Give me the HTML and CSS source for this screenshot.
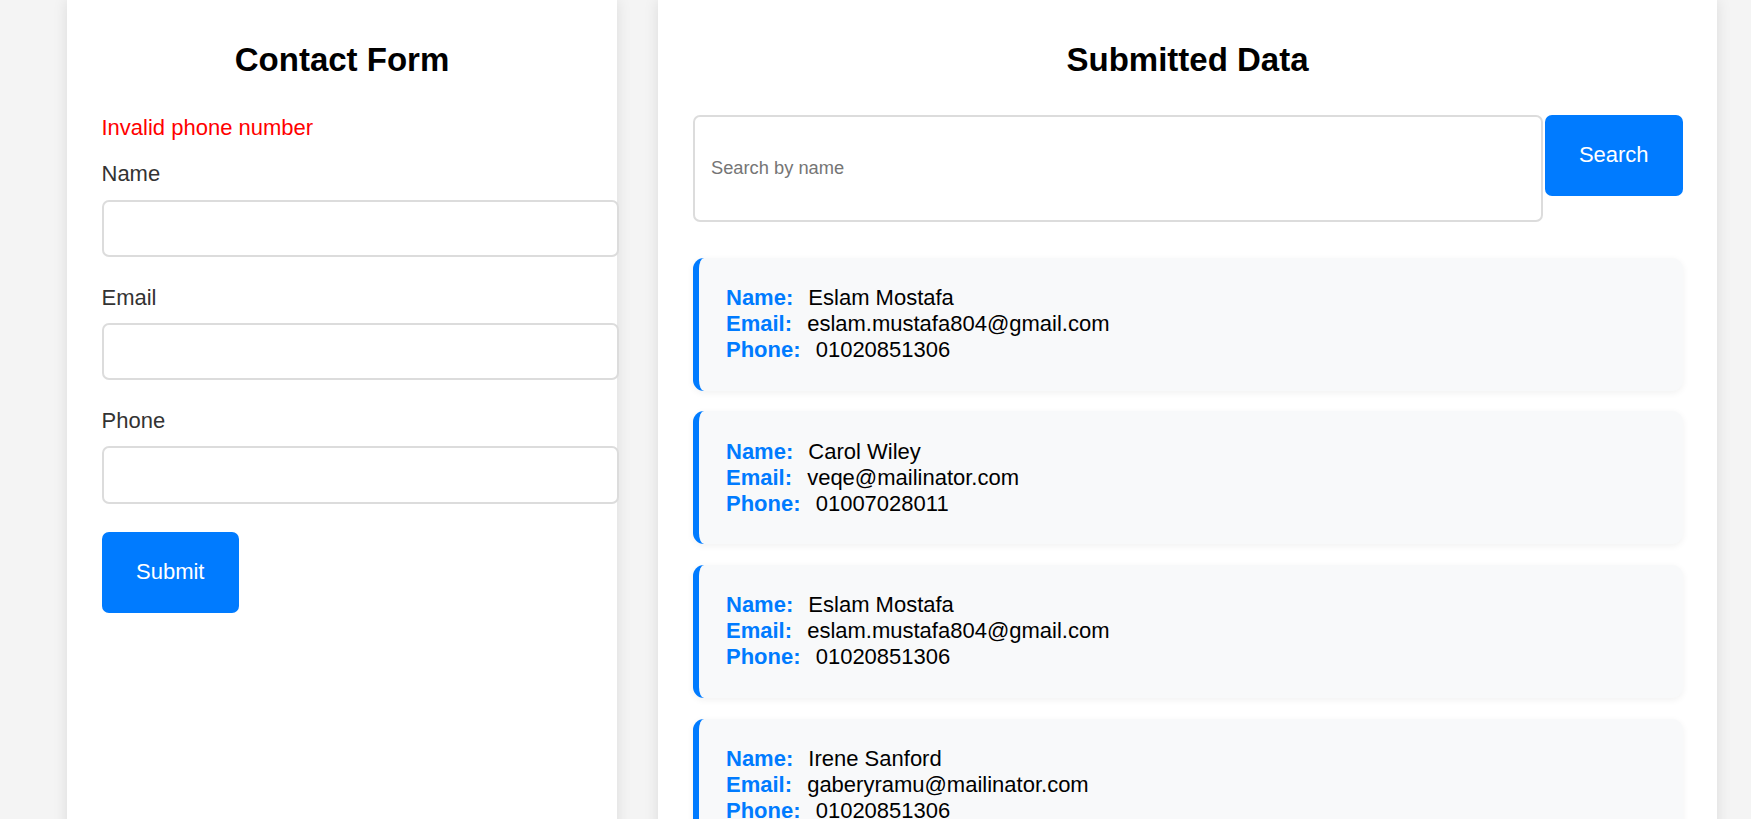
FILE: index.html
```html
<!DOCTYPE html>
<html lang="en">
<head>
<meta charset="utf-8">
<title>Contact Form</title>
<link rel="stylesheet" href="styles.css">
</head>
<body>
<div class="page">
  <section class="panel panel-form">
    <h2 class="panel-title">Contact Form</h2>
    <div class="error">Invalid phone number</div>
    <form class="contact-form">
      <div class="field">
        <label class="field-label" for="name">Name</label>
        <input class="field-input" id="name" type="text">
      </div>
      <div class="field">
        <label class="field-label" for="email">Email</label>
        <input class="field-input" id="email" type="email">
      </div>
      <div class="field">
        <label class="field-label" for="phone">Phone</label>
        <input class="field-input" id="phone" type="text">
      </div>
      <button class="btn btn-submit" type="button">Submit</button>
    </form>
  </section>

  <section class="panel panel-data">
    <h2 class="panel-title">Submitted Data</h2>
    <div class="search">
      <input class="search-input" type="text" placeholder="Search by name">
      <button class="btn btn-search" type="button">Search</button>
    </div>
    <div class="entries">
      <div class="entry">
        <div class="entry-line"><strong class="entry-key">Name:</strong> Eslam Mostafa</div>
        <div class="entry-line"><strong class="entry-key">Email:</strong> eslam.mustafa804@gmail.com</div>
        <div class="entry-line"><strong class="entry-key">Phone:</strong> 01020851306</div>
      </div>
      <div class="entry">
        <div class="entry-line"><strong class="entry-key">Name:</strong> Carol Wiley</div>
        <div class="entry-line"><strong class="entry-key">Email:</strong> veqe@mailinator.com</div>
        <div class="entry-line"><strong class="entry-key">Phone:</strong> 01007028011</div>
      </div>
      <div class="entry">
        <div class="entry-line"><strong class="entry-key">Name:</strong> Eslam Mostafa</div>
        <div class="entry-line"><strong class="entry-key">Email:</strong> eslam.mustafa804@gmail.com</div>
        <div class="entry-line"><strong class="entry-key">Phone:</strong> 01020851306</div>
      </div>
      <div class="entry">
        <div class="entry-line"><strong class="entry-key">Name:</strong> Irene Sanford</div>
        <div class="entry-line"><strong class="entry-key">Email:</strong> gaberyramu@mailinator.com</div>
        <div class="entry-line"><strong class="entry-key">Phone:</strong> 01020851306</div>
      </div>
    </div>
  </section>
</div>
</body>
</html>
```

FILE: styles.css
```css
html, body {
  margin: 0;
  height: 100%;
  overflow: hidden;
}

body {
  background: #f4f4f4;
  font-family: "Liberation Sans", Arial, sans-serif;
  font-size: 22px;
  color: #000;
}

.page {
  display: flex;
  align-items: stretch;
  gap: 41px;
  padding-left: 67px;
  min-height: 100%;
}

.panel {
  background: #fff;
  box-shadow: 0 0 14px rgba(0, 0, 0, 0.1);
  padding: 41.25px 34.5px 40px;
  box-sizing: border-box;
}

.panel-form {
  width: 550px;
  flex: none;
}

.panel-data {
  width: 1059px;
  flex: none;
}

.panel-title {
  margin: 0 0 35.5px;
  font-size: 33px;
  font-weight: bold;
  line-height: normal;
  text-align: center;
  color: #000;
}

.error {
  color: #ff0000;
  margin-bottom: 20.6px;
}

.contact-form {
  margin: 0;
}

.field {
  margin-bottom: 27.5px;
}

.field:last-of-type {
  margin-bottom: 28.5px;
}

.field-label {
  display: block;
  color: #333;
  margin-bottom: 12.5px;
}

.field-input {
  display: block;
  box-sizing: border-box;
  width: 517px;
  height: 57.3px;
  padding: 0 16.5px;
  border: 2px solid #dcdcdc;
  border-radius: 7px;
  background: #fff;
  font-family: "Liberation Sans", Arial, sans-serif;
  font-size: 18.3px;
  outline: none;
}

.btn {
  display: block;
  box-sizing: border-box;
  width: 137.5px;
  height: 80.5px;
  padding: 0;
  border: none;
  border-radius: 7px;
  background: #007bff;
  color: #fff;
  font-family: "Liberation Sans", Arial, sans-serif;
  font-size: 22px;
  cursor: pointer;
}

.search {
  display: flex;
  align-items: flex-start;
  gap: 2px;
  margin-bottom: 36px;
}

.search-input {
  flex: 1;
  min-width: 0;
  box-sizing: border-box;
  height: 107px;
  padding: 0 16.5px;
  border: 2px solid #dcdcdc;
  border-radius: 7px;
  background: #fff;
  font-family: "Liberation Sans", Arial, sans-serif;
  font-size: 18.3px;
  outline: none;
}

.search-input::placeholder {
  color: #757575;
}

.btn-search {
  flex: none;
  height: 81px;
}

.entries {
  display: flex;
  flex-direction: column;
  gap: 20.6px;
}

.entry {
  background: #f8f9fa;
  border-left: 6.9px solid #007bff;
  border-radius: 11px;
  padding: 27.5px 27.5px;
  box-shadow: 0 2px 7px rgba(0, 0, 0, 0.06);
  line-height: normal;
}

.entry-key {
  color: #007bff;
  font-weight: bold;
  margin-right: 9px;
}
```
